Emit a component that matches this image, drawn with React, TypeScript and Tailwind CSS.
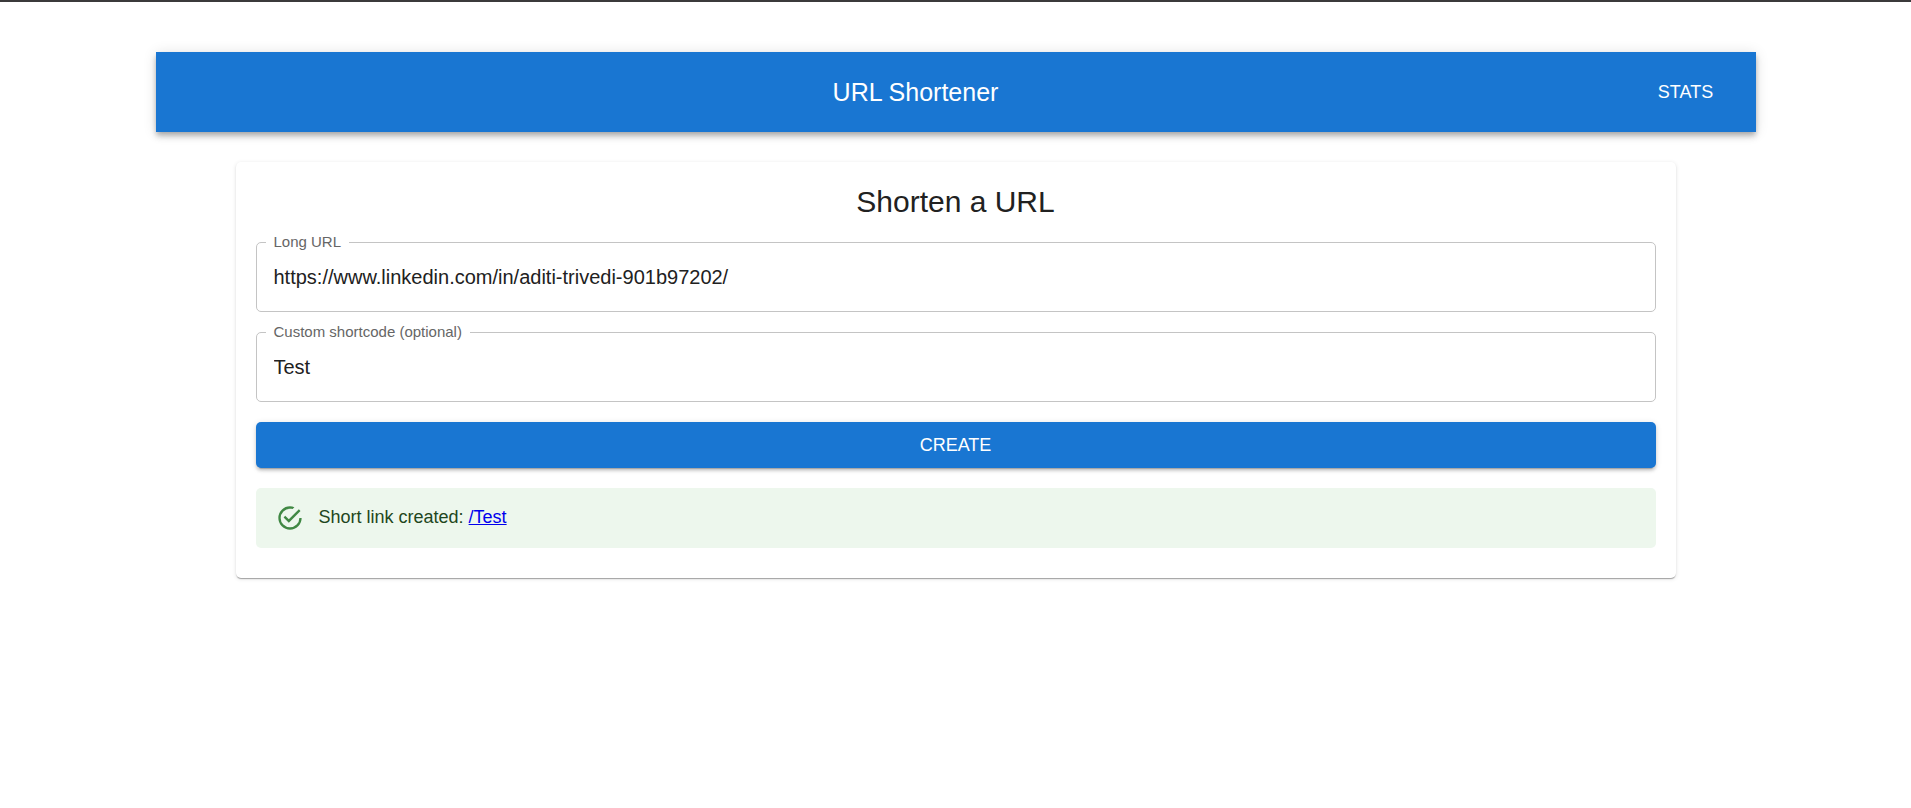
import { useState } from "react";

type TextFieldProps = {
  id: string;
  label: string;
  value: string;
  onChange: (value: string) => void;
};

function TextField({ id, label, value, onChange }: TextFieldProps) {
  return (
    <div className="relative">
      <label
        htmlFor={id}
        className="absolute left-2.5 top-0 -translate-y-1/2 bg-white px-2 text-[15px] leading-5 text-[#666666]"
      >
        {label}
      </label>
      <input
        id={id}
        type="text"
        value={value}
        onChange={(event) => onChange(event.target.value)}
        className="block h-[70px] w-full rounded-[5px] border border-[#c4c4c4] bg-transparent px-[17px] text-xl text-[#212121] outline-none focus:border-[#1976d2]"
      />
    </div>
  );
}

function SuccessIcon() {
  return (
    <svg viewBox="0 0 24 24" className="size-7 shrink-0 fill-[#2e7d32] opacity-90" aria-hidden="true">
      <path d="M20,12A8,8 0 0,1 12,20A8,8 0 0,1 4,12A8,8 0 0,1 12,4C12.76,4 13.5,4.11 14.2,4.31L15.77,2.74C14.61,2.26 13.34,2 12,2A10,10 0 0,0 2,12A10,10 0 0,0 12,22A10,10 0 0,0 22,12M7.91,10.08L6.5,11.5L11,16L21,6L19.59,4.58L11,13.17L7.91,10.08Z" />
    </svg>
  );
}

export default function App() {
  const [longUrl, setLongUrl] = useState("https://www.linkedin.com/in/aditi-trivedi-901b97202/");
  const [shortcode, setShortcode] = useState("Test");

  return (
    <div className="min-h-screen border-t-2 border-[#3b3a3b] bg-white pt-[50px] font-['Liberation_Sans',Arial,sans-serif] text-[#212121]">
      <div className="mx-auto max-w-[1600px]">
        <header className="flex h-20 items-center bg-[#1976d2] px-[30px] text-white shadow-[0_3px_5px_-1px_rgba(0,0,0,0.2),0_5px_6px_0_rgba(0,0,0,0.14),0_1px_13px_0_rgba(0,0,0,0.12)]">
          <div className="grow text-center text-[25px] leading-10">URL Shortener</div>
          <button type="button" className="w-20 rounded-[5px] py-2 text-center text-lg uppercase">
            Stats
          </button>
        </header>

        <main className="px-5 pt-[30px] lg:px-20">
          <section className="flex flex-col gap-5 rounded-[5px] bg-white px-5 pt-5 pb-[30px] shadow-[0_2px_1px_-1px_rgba(0,0,0,0.2),0_1px_1px_0_rgba(0,0,0,0.14),0_1px_4px_0_rgba(0,0,0,0.12)]">
            <h1 className="text-center text-3xl leading-10">Shorten a URL</h1>
            <TextField id="long-url" label="Long URL" value={longUrl} onChange={setLongUrl} />
            <TextField
              id="shortcode"
              label="Custom shortcode (optional)"
              value={shortcode}
              onChange={setShortcode}
            />
            <button
              type="button"
              className="h-[46px] rounded-[5px] bg-[#1976d2] text-lg uppercase text-white shadow-[0_4px_1px_-3px_rgba(0,0,0,0.2),0_3px_3px_0_rgba(0,0,0,0.14),0_1px_6px_0_rgba(0,0,0,0.12)]"
            >
              Create
            </button>
            <div
              role="status"
              className="flex h-[60px] items-center gap-[15px] rounded-[5px] bg-[#edf7ed] px-5 text-lg text-[#1e4620]"
            >
              <SuccessIcon />
              <p className="pb-0.5">
                Short link created:{" "}
                <a href="/Test" className="text-[#0000ee] underline">
                  /Test
                </a>
              </p>
            </div>
          </section>
        </main>
      </div>
    </div>
  );
}
